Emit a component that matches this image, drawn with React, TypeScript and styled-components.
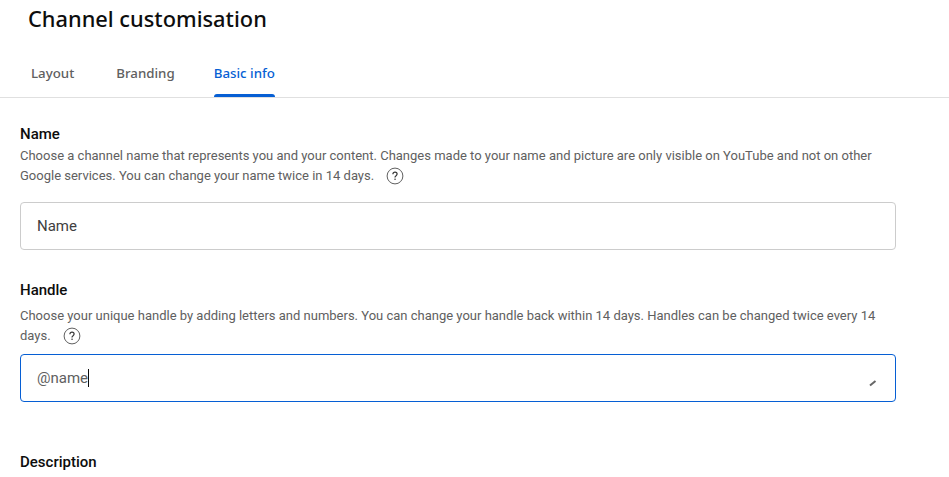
import styled, { createGlobalStyle } from 'styled-components';

const GlobalStyle = createGlobalStyle`
  html, body {
    margin: 0;
    padding: 0;
    height: 477px;
    overflow: hidden;
    background: #fff;
    font-family: Roboto, "Liberation Sans", sans-serif;
  }
`;

function HelpIcon() {
  return (
    <HelpSvg viewBox="0 0 18 18" width="18" height="18">
      <circle cx="9" cy="9" r="7.9" fill="none" stroke="#606060" strokeWidth="1" />
      <path
        d="M6.9 7.2c0-1.2.9-2 2.1-2s2.1.8 2.1 1.9c0 .8-.4 1.2-1 1.7-.7.5-1.1.9-1.1 1.7"
        fill="none"
        stroke="#333"
        strokeWidth="1.2"
      />
      <rect x="8.4" y="11.6" width="1.3" height="1.3" fill="#333" />
    </HelpSvg>
  );
}

function App() {
  return (
    <Wrap>
      <GlobalStyle />
      <Title>Channel customisation</Title>
      <Tabs>
        <Tab>Layout</Tab>
        <Tab>Branding</Tab>
        <Tab active>Basic info</Tab>
      </Tabs>
      <Content>
        <Section>
          <Label>Name</Label>
          <Hint>
            Choose a channel name that represents you and your content. Changes made to your name and picture are only
            visible on YouTube and not on other Google services. You can change your name twice in 14 days.
            <HelpIcon />
          </Hint>
          <Field>
            <FieldText>Name</FieldText>
          </Field>
        </Section>
        <Section>
          <Label>Handle</Label>
          <Hint spaced>
            Choose your unique handle by adding letters and numbers. You can change your handle back within 14 days.
            Handles can be changed twice every 14 days.
            <HelpIcon />
          </Hint>
          <Field focused>
            <FieldText muted>@name</FieldText>
            <Caret />
            <Grip viewBox="0 0 8 8" width="8" height="8">
              <path d="M1 6.5 6.5 2" stroke="#666" strokeWidth="2" fill="none" />
            </Grip>
          </Field>
        </Section>
        <LastLabel>Description</LastLabel>
      </Content>
    </Wrap>
  );
}
export default App;

const Wrap = styled.div`
  width: 949px;
  height: 477px;
  overflow: hidden;
  background: #fff;
`;

const Title = styled.h1`
  margin: 0;
  padding: 4px 0 0 28px;
  height: 35px;
  font-family: "Noto Sans", sans-serif;
  font-size: 21.8px;
  line-height: 30px;
  font-weight: 500;
  color: #0d0d0d;
`;

const Tabs = styled.div`
  display: flex;
  gap: 42px;
  height: 59px;
  padding: 7px 0 0 31px;
  box-sizing: border-box;
  border-bottom: 1px solid #e0e0e0;
`;

const Tab = styled.div<{ active?: boolean }>`
  position: relative;
  height: 51px;
  box-sizing: border-box;
  margin-left: ${(props) => (props.active ? '-3px' : '0')};
  padding-top: 17px;
  font-family: "Noto Sans", sans-serif;
  font-size: 13.3px;
  line-height: 20px;
  font-weight: 500;
  color: ${(props) => (props.active ? '#065fd4' : '#606060')};

  &::after {
    content: '';
    display: ${(props) => (props.active ? 'block' : 'none')};
    position: absolute;
    left: 0;
    right: 0;
    bottom: 0;
    height: 3px;
    background: #065fd4;
    border-radius: 3px 3px 0 0;
  }
`;

const Content = styled.div`
  padding: 26px 53px 0 20px;
  display: flex;
  flex-direction: column;
  gap: 30px;
`;

const Section = styled.section`
  display: flex;
  flex-direction: column;
`;

const Label = styled.div`
  font-size: 15px;
  line-height: 20px;
  font-weight: 500;
  color: #0d0d0d;
`;

const LastLabel = styled(Label)`
  margin-top: 20px;
`;

const Hint = styled.p<{ spaced?: boolean }>`
  margin: ${(props) => (props.spaced ? '6px 0 8px' : '2px 0 16px')};
  font-size: 13px;
  line-height: 20px;
  color: #606060;
`;

const HelpSvg = styled.svg`
  vertical-align: -5px;
  margin-left: 12px;
`;

const Field = styled.div<{ focused?: boolean }>`
  position: relative;
  height: 48px;
  box-sizing: border-box;
  display: flex;
  align-items: center;
  padding-left: 16px;
  border: 1px solid ${(props) => (props.focused ? '#065fd4' : '#ccc')};
  border-radius: 4px;
`;

const FieldText = styled.span<{ muted?: boolean }>`
  font-size: 15px;
  color: ${(props) => (props.muted ? '#606060' : '#404040')};
`;

const Caret = styled.span`
  width: 1px;
  height: 18px;
  background: #0d0d0d;
`;

const Grip = styled.svg`
  position: absolute;
  right: 18px;
  bottom: 14px;
`;
